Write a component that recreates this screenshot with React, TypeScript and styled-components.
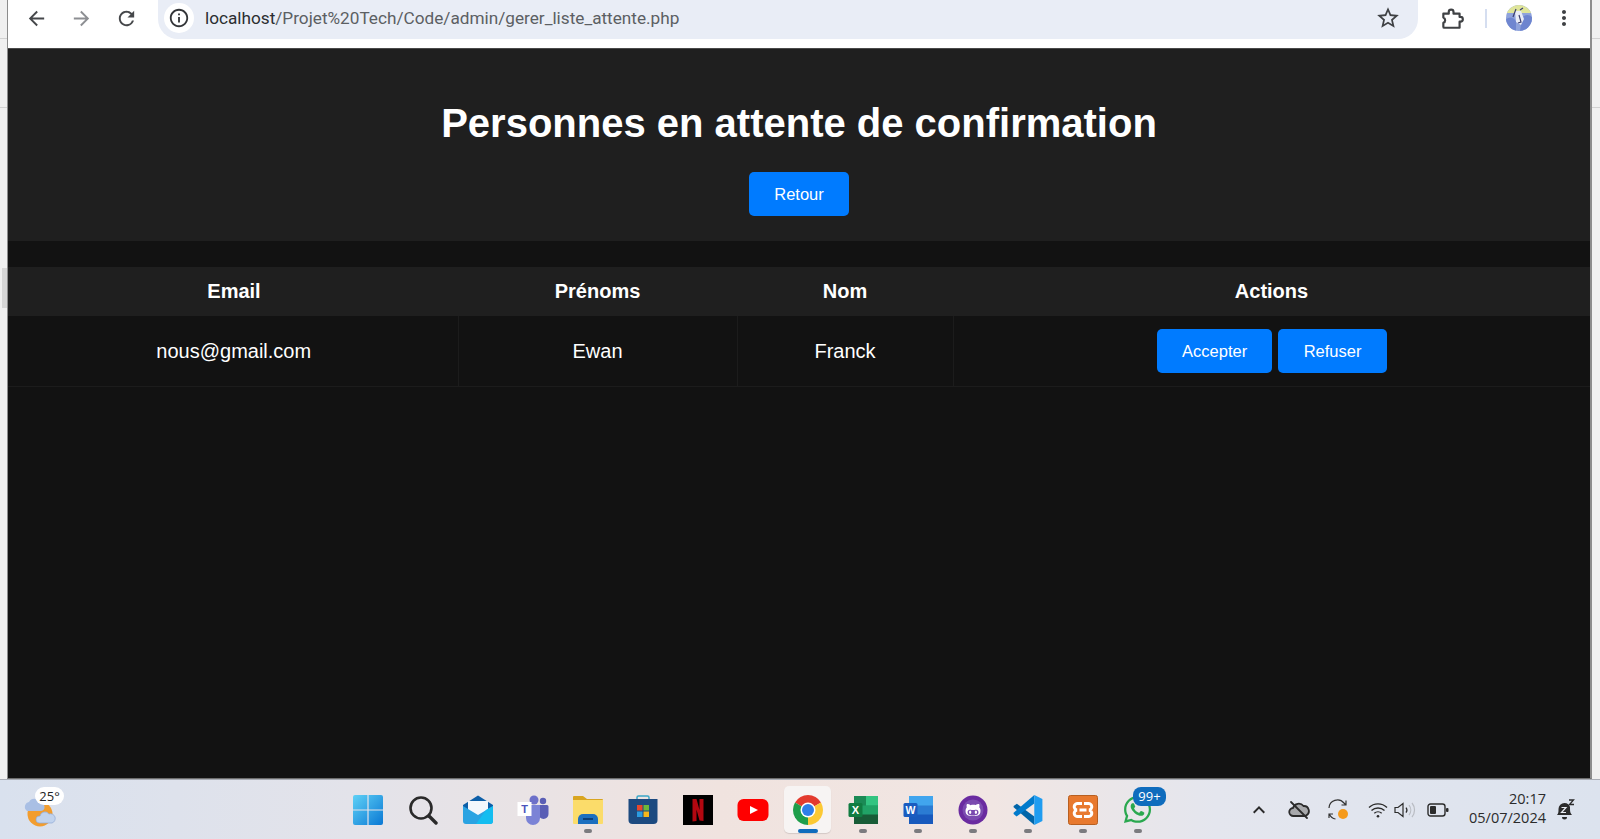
import React from 'react';
import styled, { createGlobalStyle } from 'styled-components';
import {
  MdArrowBack,
  MdArrowForward,
  MdRefresh,
  MdInfoOutline,
  MdStarBorder,
  MdMoreVert,
  MdKeyboardArrowUp,
} from 'react-icons/md';
import { FaGithubAlt, FaWhatsapp } from 'react-icons/fa';

const GlobalStyle = createGlobalStyle`
  html, body {
    margin: 0;
    padding: 0;
    background: #eeeeee;
    overflow: hidden;
  }
`;

const Screen = styled.div`
  width: 1600px;
  height: 839px;
  display: flex;
  flex-direction: column;
  overflow: hidden;
  font-family: 'Liberation Sans', Arial, sans-serif;
`;

const Desktop = styled.div`
  height: 779px;
  display: flex;
`;

const Gutter = styled.div<{ $width: number }>`
  width: ${(p) => p.$width}px;
  flex: none;
  box-sizing: border-box;
  padding: 268px 0 0 2px;
  background-image: linear-gradient(#f0f0f0 38px, #d2d2d2 38px, #d2d2d2 39px, #f0f0f0 39px, #f0f0f0 107px, #d2d2d2 107px, #d2d2d2 108px, #f0f0f0 108px);
`;

const GutterMark = styled.div`
  width: 5px;
  height: 40px;
  background: #d6d6d6;
`;

const Browser = styled.div`
  flex: 1;
  min-width: 0;
  display: flex;
  flex-direction: column;
  background: #121212;
  border-left: 1px solid #8c8c8c;
  border-right: 2px solid #8c8c8c;
  border-bottom: 1px solid #6e6e6e;
`;

const Toolbar = styled.div`
  height: 48px;
  flex: none;
  display: flex;
  align-items: flex-start;
  background: #ffffff;
  border-bottom: 1px solid #4a4a4a;
  padding-left: 6px;
`;

const NavButton = styled.div<{ $muted?: boolean }>`
  width: 45px;
  height: 36px;
  flex: none;
  display: flex;
  align-items: center;
  justify-content: center;
  color: ${(p) => (p.$muted ? '#8d8f93' : '#45474a')};
  font-size: 23px;
`;

const Omnibox = styled.div`
  width: 1260px;
  height: 39px;
  margin-left: 9px;
  flex: none;
  display: flex;
  align-items: center;
  background: #e9edf6;
  border-radius: 0 0 20px 20px;
  padding: 0 17px 3px 6px;
  box-sizing: border-box;
`;

const InfoBadge = styled.div`
  width: 30px;
  height: 30px;
  border-radius: 50%;
  background: #ffffff;
  display: flex;
  align-items: center;
  justify-content: center;
  color: #333538;
  font-size: 22px;
  flex: none;
`;

const Url = styled.div`
  margin-left: 11px;
  flex: 1;
  font-family: Roboto, 'Liberation Sans', sans-serif;
  font-size: 17.2px;
  color: #5c5f63;
  span {
    color: #2b2d30;
  }
`;

const StarIcon = styled.div`
  color: #3f4144;
  font-size: 26px;
  display: flex;
`;

const ToolbarEnd = styled.div`
  flex: 1;
  height: 36px;
  display: flex;
  align-items: center;
  padding-left: 21px;
  color: #3f4144;
`;

const Divider = styled.div`
  width: 2px;
  height: 19px;
  margin: 0 19px 0 20px;
  background: #d5def0;
`;

const Kebab = styled.div`
  font-size: 24px;
  display: flex;
  margin-left: 20px;
`;

const Content = styled.div`
  flex: 1;
  min-height: 0;
`;

const Header = styled.header`
  height: 192px;
  background: #1f1f1f;
  padding-top: 51px;
  box-sizing: border-box;
  display: flex;
  flex-direction: column;
  align-items: center;
`;

const Title = styled.h1`
  margin: 0;
  font-size: 40px;
  line-height: 46px;
  font-weight: 700;
  color: #ffffff;
`;

const ActionButton = styled.button`
  height: 44px;
  padding: 0 25.25px;
  border: none;
  border-radius: 5px;
  background: #007bff;
  color: #ffffff;
  font-family: 'Liberation Sans', Arial, sans-serif;
  font-size: 16.5px;
`;

const BackButton = styled(ActionButton)`
  margin-top: 26px;
  padding: 0 25.5px;
`;

const Table = styled.table`
  margin-top: 26px;
  width: 100%;
  table-layout: fixed;
  border-collapse: collapse;
  color: #ffffff;
`;

const Th = styled.th`
  height: 49px;
  padding: 0;
  background: #1f1f1f;
  font-size: 20px;
  font-weight: 700;
  &:first-child {
    padding-left: 2px;
  }
`;

const Td = styled.td`
  height: 70px;
  padding: 0;
  text-align: center;
  font-size: 20px;
  border-right: 1px solid #1c1c1c;
  border-bottom: 1px solid #1c1c1c;
  &:first-child {
    padding-left: 2px;
  }
  &:last-child {
    border-right: none;
  }
`;

const Buttons = styled.div`
  display: flex;
  justify-content: center;
  gap: 6px;
`;

const Taskbar = styled.footer`
  height: 60px;
  flex: none;
  box-sizing: border-box;
  border-top: 1px solid #a9adb5;
  display: grid;
  grid-template-columns: 340px auto 1fr;
  align-items: center;
  background: linear-gradient(90deg, #d9e1ee 0%, #e3e3ea 22%, #f0e3df 45%, #f1e6e3 62%, #e4e6ee 76%, #dce3ee 100%);
`;

const Weather = styled.div`
  position: relative;
  width: 340px;
  height: 59px;
`;

const TempBadge = styled.div`
  position: absolute;
  left: 35px;
  top: 7px;
  width: 29px;
  height: 18px;
  border-radius: 9px;
  background: #ffffff;
  color: #222;
  font-family: 'Open Sans', sans-serif;
  font-size: 13px;
  line-height: 18px;
  text-align: center;
`;

const Dock = styled.div`
  display: flex;
  align-items: center;
`;

const Slot = styled.div<{ $active?: boolean }>`
  position: relative;
  width: 55px;
  height: 47px;
  display: flex;
  align-items: center;
  justify-content: center;
  &::before {
    content: '';
    position: absolute;
    inset: 0 4px;
    border-radius: 5px;
    background: ${(p) => (p.$active ? '#f7f4f3' : 'transparent')};
    box-shadow: ${(p) => (p.$active ? '0 1px 1px rgba(0,0,0,.12)' : 'none')};
  }
  svg {
    position: relative;
  }
`;

const RunDot = styled.div<{ $active?: boolean }>`
  position: absolute;
  left: 50%;
  bottom: 0;
  transform: translateX(-50%);
  width: ${(p) => (p.$active ? 20 : 8)}px;
  height: 4px;
  border-radius: 2px;
  background: ${(p) => (p.$active ? '#0f6cbd' : '#7b7b7f')};
`;

const CountBadge = styled.div`
  position: absolute;
  left: 23px;
  top: 1px;
  width: 33px;
  height: 19px;
  border-radius: 8px;
  background: #0f6cbd;
  color: #ffffff;
  font-family: 'Open Sans', sans-serif;
  font-size: 13px;
  line-height: 19px;
  text-align: center;
`;

const Tray = styled.div`
  display: flex;
  align-items: center;
  justify-content: flex-end;
  padding-right: 24px;
  color: #2b2b2b;
`;

const TrayIcon = styled.div<{ $width: number }>`
  width: ${(p) => p.$width}px;
  display: flex;
  justify-content: center;
  align-items: center;
`;

const Clock = styled.div`
  margin: 0 0 3px 10px;
  font-family: 'Open Sans', sans-serif;
  font-size: 14.5px;
  line-height: 19px;
  text-align: right;
  color: #2b2b2b;
  white-space: nowrap;
`;

const Bell = styled.div`
  width: 22px;
  margin-left: 8px;
  display: flex;
  justify-content: center;
`;

const ExtensionIcon = () => (
  <svg width="26" height="26" viewBox="0 0 24 24" fill="none" stroke="#3f4144" strokeWidth="2" strokeLinejoin="round">
    <path d="M4 8H9V6.500a2.200 2.200 0 0 1 4.400 0V8H19V11h.8a2.200 2.200 0 0 1 0 4.400H19V21H5a1 1 0 0 1-1-1V16.500a2.700 2.700 0 0 0 0-5Z" />
  </svg>
);

const Avatar = () => (
  <svg width="26" height="26" viewBox="0 0 26 26">
    <defs>
      <clipPath id="av">
        <circle cx="13" cy="13" r="13" />
      </clipPath>
    </defs>
    <g clipPath="url(#av)">
      <rect width="26" height="26" fill="#8fa3dc" />
      <rect width="26" height="8" fill="#dfe59a" />
      <path d="M0 14 Q6 10 10 16 L10 26 L0 26Z" fill="#6f86d0" />
      <path d="M16 12 Q22 8 26 12 L26 26 L14 26Z" fill="#6d84cf" />
      <path d="M9 6 L15 6 L18 14 L15 20 L10 17Z" fill="#e9ecf6" />
      <path d="M7 12 L10 4 M14 5 L17 3 M13 10 L15 17 L12 18" stroke="#3d3f70" strokeWidth="1.2" fill="none" />
    </g>
  </svg>
);

const WeatherArt = () => (
  <svg width="46" height="42" viewBox="0 0 46 42" style={{ position: 'absolute', left: 22, top: 14 }}>
    <circle cx="18" cy="20" r="12.500" fill="#f29d2f" />
    <path d="M5 17a5 5 0 0 1 2-9 6 6 0 0 1 11 1 4 4 0 0 1 1 8Z" fill="#a9bfe4" />
    <path d="M17 29a3.500 3.500 0 0 1 1-7 5 5 0 0 1 9-2 4.500 4.500 0 0 1 3 9Z" fill="#c1d3ee" stroke="#8fa9d6" strokeWidth=".7" />
  </svg>
);

const WindowsIcon = () => (
  <svg width="30" height="30" viewBox="0 0 30 30">
    <defs>
      <linearGradient id="win" x1="0" y1="0" x2="1" y2="1">
        <stop offset="0" stopColor="#5fd1f6" />
        <stop offset="1" stopColor="#0a78d4" />
      </linearGradient>
    </defs>
    <path d="M0 2a2 2 0 0 1 2-2h12.400v14.400H0Z M15.600 0H28a2 2 0 0 1 2 2v12.400H15.600Z M0 15.600h14.400V30H2a2 2 0 0 1-2-2Z M15.600 15.600H30V28a2 2 0 0 1-2 2H15.600Z" fill="url(#win)" />
  </svg>
);

const SearchIcon = () => (
  <svg width="30" height="30" viewBox="0 0 30 30" fill="none" stroke="#2a2a2a">
    <circle cx="13" cy="13" r="10.500" strokeWidth="2.600" />
    <path d="M21 21l7 7" strokeWidth="3.400" strokeLinecap="round" />
  </svg>
);

const MailIcon = () => (
  <svg width="32" height="30" viewBox="0 0 32 30">
    <path d="M1 10 L16 0.500 L31 10 L31 14 L1 14Z" fill="#0d5fa8" />
    <path d="M6 6h20v14H6Z" fill="#f2f7fc" />
    <path d="M1 11 L16 20 L31 11 V26a3 3 0 0 1-3 3H4a3 3 0 0 1-3-3Z" fill="#2aa3e2" />
    <path d="M31 11 V26a3 3 0 0 1-3 3H14L24 15Z" fill="#14bdf0" />
  </svg>
);

const TeamsIcon = () => (
  <svg width="32" height="30" viewBox="0 0 32 30">
    <circle cx="17" cy="5" r="4.500" fill="#6d70c9" />
    <circle cx="26" cy="6" r="3.200" fill="#5a5eb5" />
    <path d="M21 10h9a1.500 1.500 0 0 1 1.500 1.500V19a5 5 0 0 1-10 0Z" fill="#5a5eb5" />
    <path d="M9 10h14v13a7 7 0 0 1-14 0Z" fill="#7b83d6" />
    <rect x="0.500" y="7" width="14" height="14" fill="#fff" />
    <text x="7.500" y="18" textAnchor="middle" fontFamily="'Liberation Sans', sans-serif" fontSize="11" fontWeight="700" fill="#4b53bc">T</text>
  </svg>
);

const FolderIcon = () => (
  <svg width="32" height="30" viewBox="0 0 32 30">
    <path d="M1 2a1 1 0 0 1 1-1h9l4 3h15a1 1 0 0 1 1 1v3H1Z" fill="#d9a520" />
    <path d="M1 5h30v23a1 1 0 0 1-1 1H2a1 1 0 0 1-1-1Z" fill="#fbdc6a" />
    <path d="M6 29v-5a5 5 0 0 1 5-5h10a5 5 0 0 1 5 5v5Z" fill="#1c6fbf" />
    <rect x="11" y="23" width="10" height="2" fill="#0b3f7a" />
  </svg>
);

const StoreIcon = () => (
  <svg width="30" height="30" viewBox="0 0 30 30">
    <path d="M9 5V2.500A1.500 1.500 0 0 1 10.500 1h9A1.500 1.500 0 0 1 21 2.500V5" fill="none" stroke="#3aa6c7" strokeWidth="1.500" />
    <path d="M0.500 4h29v21a4 4 0 0 1-4 4h-21a4 4 0 0 1-4-4Z" fill="#1c4a80" />
    <rect x="9" y="10" width="5.500" height="5.500" fill="#e5482d" />
    <rect x="15.500" y="10" width="5.500" height="5.500" fill="#6cb83a" />
    <rect x="9" y="16.500" width="5.500" height="5.500" fill="#2b9be0" />
    <rect x="15.500" y="16.500" width="5.500" height="5.500" fill="#f6b71a" />
  </svg>
);

const NetflixIcon = () => (
  <svg width="30" height="30" viewBox="0 0 30 30">
    <rect width="30" height="30" fill="#000" />
    <path d="M9.500 4h4l3 11V4h4v22l-4-.5-3-11V26l-4 .5Z" fill="#b20710" />
  </svg>
);

const YoutubeIcon = () => (
  <svg width="32" height="24" viewBox="0 0 32 24">
    <rect x="0.500" y="1" width="31" height="22" rx="6" fill="#f00" />
    <path d="M13 8l8 4-8 4Z" fill="#fff" />
  </svg>
);

const ChromeIcon = () => (
  <svg width="30" height="30" viewBox="0 0 30 30">
    <path d="M15 15 L2.010 7.500 A15 15 0 0 1 27.990 7.500 Z" fill="#e33b2e" />
    <path d="M15 15 L27.990 7.500 A15 15 0 0 1 15 30 Z" fill="#fcc934" />
    <path d="M15 15 L15 30 A15 15 0 0 1 2.010 7.500 Z" fill="#1e9e4a" />
    <circle cx="15" cy="15" r="7.500" fill="#fff" />
    <circle cx="15" cy="15" r="6" fill="#2f7fe8" />
  </svg>
);

const ExcelIcon = () => (
  <svg width="30" height="30" viewBox="0 0 30 30">
    <rect x="6" y="1" width="24" height="28" rx="2" fill="#21a366" />
    <rect x="6" y="1" width="12" height="9.500" fill="#1b8a55" />
    <rect x="18" y="1" width="12" height="9.500" fill="#33c481" />
    <rect x="18" y="10.500" width="12" height="9" fill="#21a366" />
    <rect x="6" y="19.500" width="24" height="9.500" fill="#185c37" />
    <rect x="0.500" y="8" width="14" height="14" rx="1.500" fill="#107c41" />
    <text x="7.500" y="19" textAnchor="middle" fontFamily="'Liberation Sans', sans-serif" fontSize="11" fontWeight="700" fill="#fff">X</text>
  </svg>
);

const WordIcon = () => (
  <svg width="30" height="30" viewBox="0 0 30 30">
    <rect x="6" y="1" width="24" height="28" rx="2" fill="#2b7cd3" />
    <rect x="6" y="1" width="24" height="9.500" fill="#41a5ee" />
    <rect x="6" y="19.500" width="24" height="9.500" fill="#185abd" />
    <rect x="0.500" y="8" width="14" height="14" rx="1.500" fill="#1a5cc0" />
    <text x="7.500" y="19" textAnchor="middle" fontFamily="'Liberation Sans', sans-serif" fontSize="10.500" fontWeight="700" fill="#fff">W</text>
  </svg>
);

const GithubIcon = () => (
  <svg width="30" height="30" viewBox="0 0 30 30">
    <circle cx="15" cy="15" r="14.500" fill="#6a2ba0" />
    <circle cx="15" cy="15" r="10.500" fill="#7b4bb0" />
    <FaGithubAlt x="7" y="7" size="16" color="#ffffff" />
  </svg>
);

const VscodeIcon = () => (
  <svg width="30" height="30" viewBox="0 0 100 100">
    <path d="M71 100 L71 72 L13 29 L2 37 L2 41 Z" fill="#0065a9" />
    <path d="M71 0 L71 28 L12 72 L2 63 L2 59 Z" fill="#007acc" />
    <path d="M71 0 L98 13 V87 L71 100 Z" fill="#1f9cf0" />
  </svg>
);

const XamppIcon = () => (
  <svg width="30" height="30" viewBox="0 0 30 30">
    <rect x="0.500" y="0.500" width="29" height="29" rx="2" fill="#e8792e" stroke="#b85f20" />
    <path d="M14 8.500H10a3.200 3.200 0 0 0-1 6.500 3.200 3.200 0 0 0 1 6.500h4M16 8.500h4a3.200 3.200 0 0 1 1 6.500 3.200 3.200 0 0 1-1 6.500h-4M11.500 15h7" fill="none" stroke="#fff" strokeWidth="3" />
  </svg>
);

const WhatsappIcon = () => <FaWhatsapp size={31} color="#2aa84f" />;

const CloudOffIcon = () => (
  <svg width="22" height="20" viewBox="0 0 22 20" fill="none" stroke="#2b2b2b" strokeWidth="1.800" strokeLinecap="round">
    <path d="M5.500 16a4 4 0 0 1-.5-8 6 6 0 0 1 10.500-2 5 5 0 0 1 2.500 9.500 3 3 0 0 1-1.500.5Z" fill="#a8a9ac" />
    <path d="M3 2l16 16" />
  </svg>
);

const SyncIcon = () => (
  <svg width="24" height="24" viewBox="0 0 24 24" fill="none" stroke="#333" strokeWidth="1.200">
    <path d="M2 10a8.500 8.500 0 0 1 15-5l2 2M19 2.500V7h-4.500" />
    <path d="M2 20v-4h4M2.500 16.500a8 8 0 0 0 6 4.500" />
    <circle cx="16" cy="16" r="5" fill="#f59a1b" stroke="none" />
  </svg>
);

const WifiIcon = () => (
  <svg width="20" height="18" viewBox="0 0 20 18" fill="none" stroke="#2b2b2b" strokeWidth="1.400">
    <path d="M1 6.500a13 13 0 0 1 18 0M3.500 9.500a9.500 9.500 0 0 1 13 0M6.300 12.300a5.500 5.500 0 0 1 7.400 0" />
    <circle cx="10" cy="15.200" r="1.300" fill="#2b2b2b" stroke="none" />
  </svg>
);

const VolumeIcon = () => (
  <svg width="22" height="18" viewBox="0 0 22 18" fill="none" stroke="#2b2b2b" strokeWidth="1.200">
    <path d="M1 6.500h3L9 2.500v13L4 11.500H1Z" />
    <path d="M12 6.500a4 4 0 0 1 0 5" />
    <path d="M15 4a8 8 0 0 1 0 10M18 2a11 11 0 0 1 0 14" stroke="#b9bcc2" />
  </svg>
);

const BatteryIcon = () => (
  <svg width="22" height="14" viewBox="0 0 22 14">
    <rect x="1" y="1" width="17" height="12" rx="2.500" fill="none" stroke="#2b2b2b" strokeWidth="1.400" />
    <rect x="3" y="3" width="6" height="8" rx="1" fill="#2b2b2b" />
    <rect x="19" y="5" width="2.500" height="4" rx="1" fill="#2b2b2b" />
  </svg>
);

const BellIcon = () => (
  <svg width="20" height="22" viewBox="0 0 20 22">
    <path d="M2 16c1.500-1.500 1.500-3 1.500-6a6 6 0 0 1 6-6c3 0 5 2 5.500 4v2c0 3 .5 4.500 2 6Z" fill="#2b2b2b" />
    <path d="M7 18h5a2.500 2.500 0 0 1-5 0Z" fill="#2b2b2b" />
    <path d="M6.500 8.500h4.500l-4.500 5h4.500" stroke="#e8ebf2" strokeWidth="1.200" fill="none" />
    <path d="M14 1h4.500l-4 4.500h4.500" stroke="#2b2b2b" strokeWidth="1.300" fill="none" />
  </svg>
);

const pending = [{ email: 'nous@gmail.com', firstName: 'Ewan', lastName: 'Franck' }];

const dock = [
  { key: 'windows', icon: <WindowsIcon /> },
  { key: 'search', icon: <SearchIcon /> },
  { key: 'mail', icon: <MailIcon /> },
  { key: 'teams', icon: <TeamsIcon /> },
  { key: 'folder', icon: <FolderIcon />, running: true },
  { key: 'store', icon: <StoreIcon /> },
  { key: 'netflix', icon: <NetflixIcon /> },
  { key: 'youtube', icon: <YoutubeIcon /> },
  { key: 'chrome', icon: <ChromeIcon />, active: true },
  { key: 'excel', icon: <ExcelIcon />, running: true },
  { key: 'word', icon: <WordIcon />, running: true },
  { key: 'github', icon: <GithubIcon />, running: true },
  { key: 'vscode', icon: <VscodeIcon />, running: true },
  { key: 'xampp', icon: <XamppIcon />, running: true },
  { key: 'whatsapp', icon: <WhatsappIcon />, running: true, count: '99+' },
];

const App = () => (
  <>
    <GlobalStyle />
    <Screen>
      <Desktop>
        <Gutter $width={7}>
          <GutterMark />
        </Gutter>
        <Browser>
          <Toolbar>
            <NavButton>
              <MdArrowBack />
            </NavButton>
            <NavButton $muted>
              <MdArrowForward />
            </NavButton>
            <NavButton>
              <MdRefresh />
            </NavButton>
            <Omnibox>
              <InfoBadge>
                <MdInfoOutline />
              </InfoBadge>
              <Url>
                <span>localhost</span>/Projet%20Tech/Code/admin/gerer_liste_attente.php
              </Url>
              <StarIcon>
                <MdStarBorder />
              </StarIcon>
            </Omnibox>
            <ToolbarEnd>
              <ExtensionIcon />
              <Divider />
              <Avatar />
              <Kebab>
                <MdMoreVert />
              </Kebab>
            </ToolbarEnd>
          </Toolbar>
          <Content>
            <Header>
              <Title>Personnes en attente de confirmation</Title>
              <BackButton>Retour</BackButton>
            </Header>
            <Table>
              <colgroup>
                <col style={{ width: 450 }} />
                <col style={{ width: 279 }} />
                <col style={{ width: 216 }} />
                <col />
              </colgroup>
              <thead>
                <tr>
                  <Th>Email</Th>
                  <Th>Prénoms</Th>
                  <Th>Nom</Th>
                  <Th>Actions</Th>
                </tr>
              </thead>
              <tbody>
                {pending.map((person) => (
                  <tr key={person.email}>
                    <Td>{person.email}</Td>
                    <Td>{person.firstName}</Td>
                    <Td>{person.lastName}</Td>
                    <Td>
                      <Buttons>
                        <ActionButton>Accepter</ActionButton>
                        <ActionButton>Refuser</ActionButton>
                      </Buttons>
                    </Td>
                  </tr>
                ))}
              </tbody>
            </Table>
          </Content>
        </Browser>
        <Gutter $width={8} />
      </Desktop>
      <Taskbar>
        <Weather>
          <WeatherArt />
          <TempBadge>25°</TempBadge>
        </Weather>
        <Dock>
          {dock.map((item) => (
            <Slot key={item.key} $active={item.active}>
              {item.icon}
              {(item.running || item.active) && <RunDot $active={item.active} />}
              {item.count && <CountBadge>{item.count}</CountBadge>}
            </Slot>
          ))}
        </Dock>
        <Tray>
          <TrayIcon $width={48}>
            <MdKeyboardArrowUp size={24} />
          </TrayIcon>
          <TrayIcon $width={32}>
            <CloudOffIcon />
          </TrayIcon>
          <TrayIcon $width={48}>
            <SyncIcon />
          </TrayIcon>
          <TrayIcon $width={30}>
            <WifiIcon />
          </TrayIcon>
          <TrayIcon $width={24}>
            <VolumeIcon />
          </TrayIcon>
          <TrayIcon $width={42}>
            <BatteryIcon />
          </TrayIcon>
          <Clock>
            20:17
            <br />
            05/07/2024
          </Clock>
          <Bell>
            <BellIcon />
          </Bell>
        </Tray>
      </Taskbar>
    </Screen>
  </>
);

export default App;
